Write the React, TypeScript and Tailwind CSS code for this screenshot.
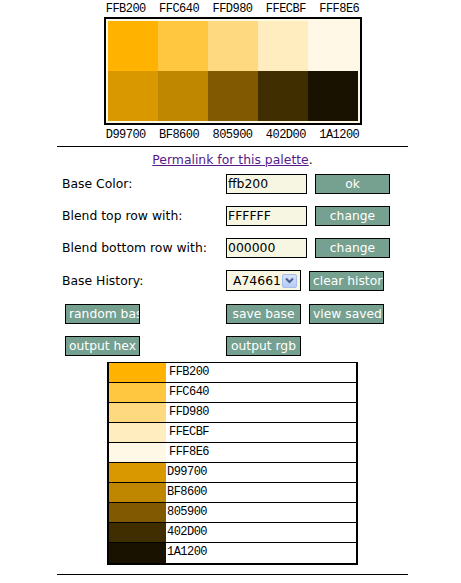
import React from "react";

const top = ["FFB200", "FFC640", "FFD980", "FFECBF", "FFF8E6"];
const bottom = ["D99700", "BF8600", "805900", "402D00", "1A1200"];

const sans = { fontFamily: '"DejaVu Sans", Verdana, sans-serif' } as const;
const mono = { fontFamily: '"Liberation Mono", "Courier New", monospace' } as const;

function Btn({ children }: { children: React.ReactNode }) {
  return (
    <div className="w-[75px] h-[20px] shrink-0 border border-black bg-[#76a08f] text-white text-[12.3px] leading-[18px] px-[3px] text-center whitespace-nowrap overflow-hidden">
      {children}
    </div>
  );
}

function Input({ value }: { value: string }) {
  return (
    <div className="w-[81px] h-[20px] shrink-0 border border-black bg-[#f7f6e3] text-[12.4px] leading-[18px] pl-[1px] text-black whitespace-nowrap overflow-hidden">
      {value}
    </div>
  );
}

export default function App() {
  return (
    <div className="w-[461px] h-[583px] bg-white text-black overflow-hidden" style={sans}>
      <div className="ml-[57px] w-[351px] pt-[2px]">
        <div
          className="h-[15px] text-center text-[12px] leading-[15px] tracking-[-0.53px] whitespace-pre"
          style={mono}
        >
          {top.join("  ")}
        </div>
        <div className="mx-auto w-[258px] border-2 border-black bg-[#fdf9e4] p-[2px] flex">
          {top.map((c, i) => (
            <div key={c} className="flex flex-col">
              <div className="w-[50px] h-[50px]" style={{ background: "#" + c }} />
              <div className="w-[50px] h-[50px]" style={{ background: "#" + bottom[i] }} />
            </div>
          ))}
        </div>
        <div
          className="h-[15px] text-center text-[12px] leading-[15px] tracking-[-0.53px] whitespace-pre mt-[3px]"
          style={mono}
        >
          {bottom.join("  ")}
        </div>
        <div className="mt-[3px] h-px bg-black" />
        <div className="h-[15px] text-center text-[12.4px] leading-[15px] mt-[5px]">
          <span className="text-[#551a8b] underline">Permalink for this palette</span>.
        </div>

        <div className="mt-[7px] text-[12.4px] leading-[18px] flex flex-col gap-[12px]">
          <div className="flex items-center h-[20px]">
            <div className="w-[169px] pl-[5px]">Base Color:</div>
            <Input value="ffb200" />
            <div className="w-[8px]" />
            <Btn>ok</Btn>
          </div>
          <div className="flex items-center h-[20px]">
            <div className="w-[169px] pl-[5px]">Blend top row with:</div>
            <Input value="FFFFFF" />
            <div className="w-[8px]" />
            <Btn>change</Btn>
          </div>
          <div className="flex items-center h-[20px]">
            <div className="w-[169px] pl-[5px]">Blend bottom row with:</div>
            <Input value="000000" />
            <div className="w-[8px]" />
            <Btn>change</Btn>
          </div>
          <div className="flex items-center h-[21px]">
            <div className="w-[169px] pl-[5px]">Base History:</div>
            <div className="w-[75px] h-[21px] shrink-0 border border-black bg-[#f7f6e3] flex items-center pr-[3px]">
              <div className="flex-1 overflow-hidden whitespace-nowrap pl-[6px] text-[12.4px] leading-[18px]">
                A74661
              </div>
              <div className="w-[15px] h-[14px] shrink-0 rounded-[2px] border border-[#a9bdea] bg-[linear-gradient(#d6e2fb,#b7cbf6)] flex items-center justify-center">
                <svg width="9" height="7" viewBox="0 0 9 7">
                  <path d="M1 1.5 L4.5 5 L8 1.5" stroke="#4a5f8f" strokeWidth="2" fill="none" />
                </svg>
              </div>
            </div>
            <div className="w-[8px]" />
            <Btn>clear history</Btn>
          </div>
          <div className="flex items-center h-[20px] mt-[1px]">
            <div className="w-[8px]" />
            <Btn>random base</Btn>
            <div className="w-[86px]" />
            <Btn>save base</Btn>
            <div className="w-[8px]" />
            <Btn>view saved</Btn>
          </div>
          <div className="flex items-center h-[20px]">
            <div className="w-[8px]" />
            <Btn>output hex</Btn>
            <div className="w-[86px]" />
            <Btn>output rgb</Btn>
          </div>
        </div>

        <div className="mt-[6px] mx-auto w-[251px] border-t border-l-2 border-r-2 border-b-2 border-black bg-white">
          {[...top, ...bottom].map((c, i) => (
            <div
              key={c}
              className={"flex h-[20px] " + (i < 9 ? "border-b border-black" : "h-[19px]")}
            >
              <div className="w-[57px] shrink-0" style={{ background: "#" + c }} />
              <div
                className={
                  "text-[12px] leading-[19px] tracking-[-0.53px] " + (i < 5 ? "pl-[3px]" : "pl-[1px]")
                }
                style={mono}
              >
                {c}
              </div>
            </div>
          ))}
        </div>
        <div className="mt-[9px] h-px bg-black" />
      </div>
    </div>
  );
}
